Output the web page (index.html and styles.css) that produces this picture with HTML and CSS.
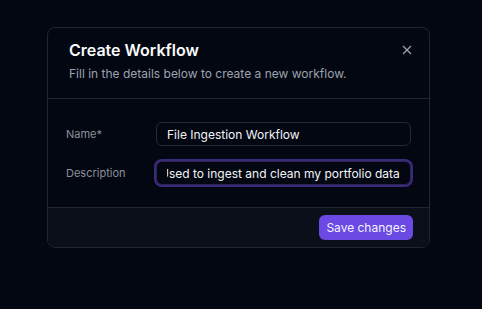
FILE: index.html
```html
<!DOCTYPE html>
<html lang="en">
<head>
  <meta charset="UTF-8">
  <title>Create Workflow</title>
  <meta name="viewport" content="width=device-width, initial-scale=1.0">
  <link rel="stylesheet" href="styles.css">
</head>
<body>

  <!-- ---------- Dialog ---------- -->
  <div class="dialog">
    <div class="dialog-header">
      <h2>Create Workflow</h2>
      <p>Fill in the details below to create a new workflow.</p>
      <button class="close" aria-label="Close">
        <svg viewBox="0 0 10 10" width="10" height="10">
          <line x1="1" y1="1" x2="9" y2="9" stroke="currentColor" stroke-width="1.3"/>
          <line x1="9" y1="1" x2="1" y2="9" stroke="currentColor" stroke-width="1.3"/>
        </svg>
      </button>
    </div>

    <div class="dialog-body">
      <div class="field">
        <label for="name">Name*</label>
        <input type="text" id="name" value="File Ingestion Workflow">
      </div>
      <div class="field">
        <label for="description">Description</label>
        <input type="text" id="description" class="focused" value="Used to ingest and clean my portfolio data">
      </div>
    </div>

    <div class="dialog-footer">
      <button class="save">Save changes</button>
    </div>
  </div>

  <script src="app.js"></script>
</body>
</html>
```

FILE: styles.css
```css
/* ---------- Base ---------- */
body {
  margin: 0;
  padding: 27px 52px 0 47px;
  min-height: 100vh;
  box-sizing: border-box;
  background-color: #030712;
  font-family: Inter, "Noto Sans", sans-serif;
  color: #f3f4f6;
}

/* ---------- Dialog ---------- */
.dialog {
  width: 383px;
  border: 1px solid #1f2533;
  border-radius: 8px;
  background: #030712;
  overflow: hidden;
  box-sizing: border-box;
}

.dialog-header {
  position: relative;
  padding: 11px 21px 14px;
  border-bottom: 1px solid #1f2533;
}
.dialog-header h2 {
  margin: 0;
  font-size: 16px;
  line-height: 22px;
  font-weight: 600;
  color: #f9fafb;
}
.dialog-header p {
  margin: 3px 0 0;
  font-size: 12px;
  line-height: 20px;
  color: #9ca3af;
}

.close {
  position: absolute;
  top: 17px;
  right: 17px;
  padding: 0;
  width: 10px;
  height: 10px;
  border: none;
  background: none;
  color: #9ca3af;
  cursor: pointer;
}
.close svg { display: block; }

/* ---------- Form ---------- */
.dialog-body {
  display: flex;
  flex-direction: column;
  gap: 15px;
  padding: 23px 18px 22px;
}
.field {
  display: grid;
  grid-template-columns: 90px 1fr;
  align-items: center;
}
.field label {
  font-size: 11px;
  color: #8b919c;
}
.field input {
  height: 24px;
  padding: 0 10px;
  border: 1px solid #232a38;
  border-radius: 6px;
  background: #030712;
  color: #f3f4f6;
  font-family: inherit;
  font-size: 12px;
  box-sizing: border-box;
  outline: none;
}
.field input.focused {
  box-shadow: 0 0 0 2px #3a2a7a;
  border-color: #2d2356;
}

/* ---------- Footer ---------- */
.dialog-footer {
  display: flex;
  justify-content: flex-end;
  padding: 7px 16px;
  border-top: 1px solid #1f2533;
  background: #0b0f1a;
}
.save {
  height: 25px;
  padding: 0 7px;
  border: none;
  border-radius: 6px;
  background: #6a4ae2;
  color: #f5f3ff;
  font-family: inherit;
  font-size: 12px;
  cursor: pointer;
}
```

FILE: app.js
```js
// show the end of the long description, like the field was just typed in
const desc = document.getElementById('description');
desc.scrollLeft = desc.scrollWidth;
```
